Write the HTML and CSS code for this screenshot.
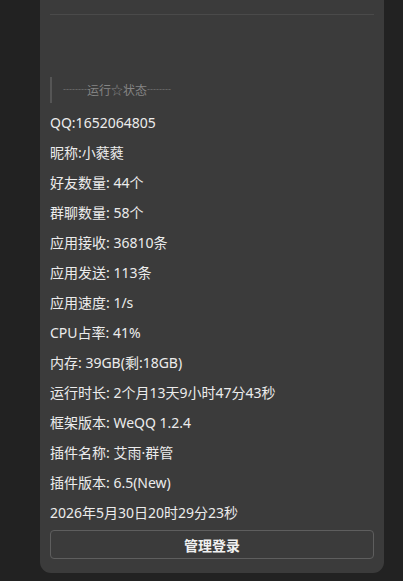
FILE: index.html
```html
<!DOCTYPE html>
<html lang="zh-CN">
<head>
<meta charset="utf-8">
<link rel="stylesheet" href="styles.css">
</head>
<body>
<div class="card">
  <div class="top-rule"></div>
  <div class="quote">┈┈运行☆状态┈┈</div>
  <div class="rows">
    <div class="row">QQ:1652064805</div>
    <div class="row">昵称:小蕤蕤</div>
    <div class="row">好友数量: 44个</div>
    <div class="row">群聊数量: 58个</div>
    <div class="row">应用接收: 36810条</div>
    <div class="row">应用发送: 113条</div>
    <div class="row">应用速度: 1/s</div>
    <div class="row">CPU占率: 41%</div>
    <div class="row">内存: 39GB(剩:18GB)</div>
    <div class="row">运行时长: 2个月13天9小时47分43秒</div>
    <div class="row">框架版本: WeQQ 1.2.4</div>
    <div class="row">插件名称: 艾雨·群管</div>
    <div class="row">插件版本: 6.5(New)</div>
    <div class="row">2026年5月30日20时29分23秒</div>
  </div>
  <button class="btn">管理登录</button>
</div>
</body>
</html>
```

FILE: styles.css
```css
html, body {
  margin: 0;
  padding: 0;
  background: #222222;
}
body {
  font-family: "Noto Sans", "Noto Sans CJK SC", sans-serif;
  color: #ececec;
}
.card {
  box-sizing: border-box;
  width: 344px;
  margin-left: 40px;
  background: #3b3b3b;
  border-radius: 0 0 11px 11px;
  padding: 0 10px 14px;
  display: flex;
  flex-direction: column;
}
.top-rule {
  height: 14px;
  border-bottom: 1px solid #4a4a4a;
}
.quote {
  margin-top: 62px;
  height: 26px;
  line-height: 26px;
  border-left: 2px solid #555555;
  padding-left: 11px;
  font-family: "Noto Sans CJK SC", sans-serif;
  font-size: 12px;
  color: #858585;
}
.rows {
  margin-top: 5px;
  display: flex;
  flex-direction: column;
}
.row {
  height: 30px;
  line-height: 30px;
  font-size: 14px;
  white-space: nowrap;
}
.btn {
  margin-top: 2px;
  height: 29px;
  width: 100%;
  box-sizing: border-box;
  background: transparent;
  border: 1px solid #5e5e5e;
  border-radius: 4px;
  color: #f0f0f0;
  font-family: "Noto Sans CJK SC", sans-serif;
  font-size: 14px;
  font-weight: bold;
  padding: 0;
}
```
